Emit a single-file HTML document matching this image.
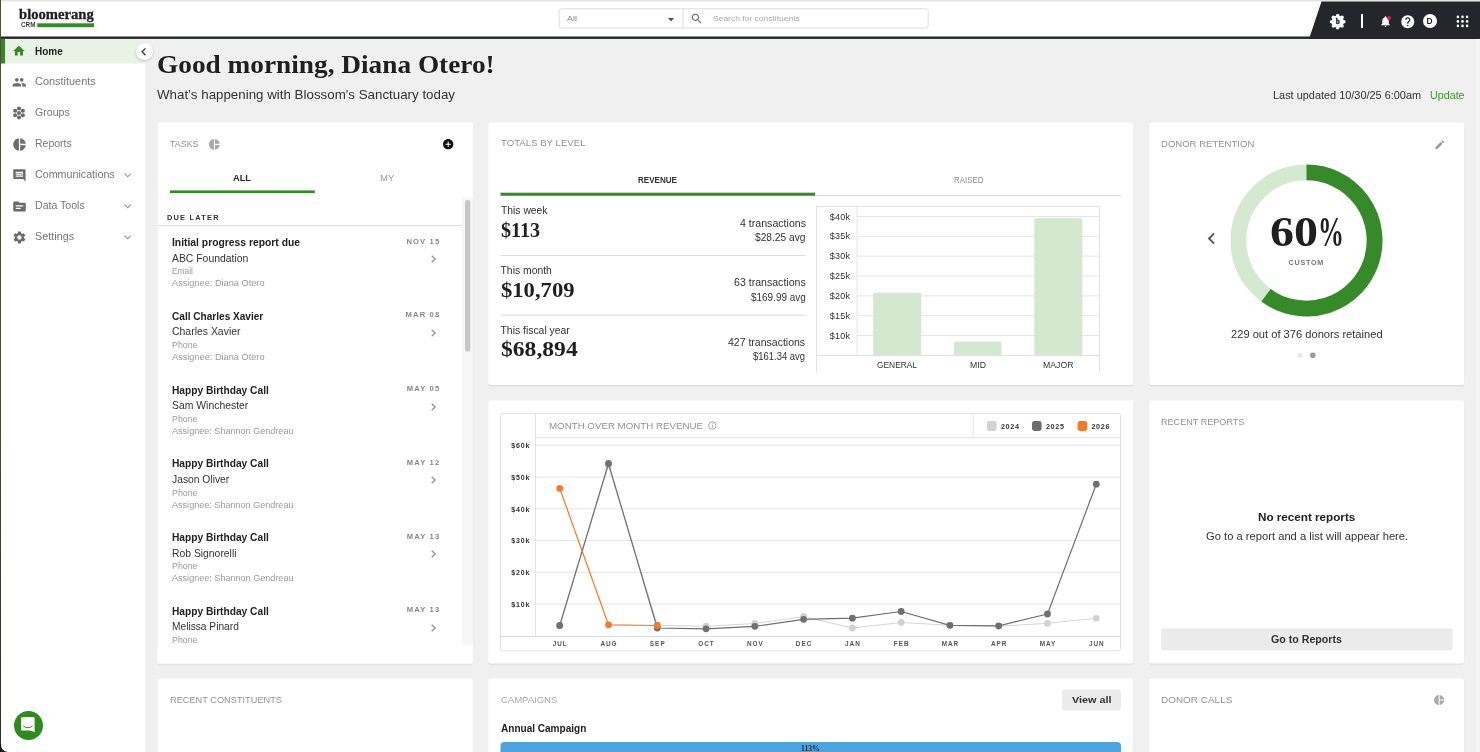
<!DOCTYPE html>
<html lang="en"><head><meta charset="utf-8"><title>Bloomerang CRM - Home</title>
<style>
*{box-sizing:border-box}
html,body{margin:0;padding:0}
body{width:1480px;height:752px;overflow:hidden;position:relative;background:#f0f0f0;font-family:"Liberation Sans",sans-serif;color:#333}
.t{position:absolute;white-space:nowrap;line-height:1;transform-origin:0 0}
.ss{font-family:"Liberation Sans",sans-serif}
.sf{font-family:"Liberation Serif",serif}
.a{position:absolute}
.card{position:absolute;background:#fff;border-radius:3px;box-shadow:0 1px 2px rgba(0,0,0,.07)}
svg{position:absolute;overflow:visible}
</style></head><body><div id="app" style="position:absolute;left:0;top:0;width:1480px;height:752px;overflow:hidden;will-change:transform">

<div class="a" style="left:0;top:0;width:1480px;height:37px;background:#fff"></div>
<div class="a" style="left:0;top:0;width:1480px;height:1px;background:#e3e3e3"></div>
<div class="a" style="left:0;top:1px;width:1480px;height:1px;background:#f3f3f3"></div>
<svg style="left:1300px;top:0" width="180" height="39" viewBox="1300 0 180 39"><polygon points="1321.5,1.5 1480,1.5 1480,39 1309,39" fill="#23262b"/></svg>
<span class="t sf" style="left:19.30px;top:7.25px;font-size:15px;font-weight:700;color:#1d1f23;transform:scaleX(0.9743);-webkit-text-stroke:.3px #1d1f23;">bloomerang</span>
<span class="t ss" style="left:20.80px;top:22.02px;font-size:6.8px;font-weight:700;color:#3a3a3a;transform:scaleX(0.9300);">CRM</span>
<svg style="left:36px;top:22px" width="60" height="7"><rect x="1.30" y="1.30" width="56.80" height="3.90" fill="#36892a"/></svg>
<svg style="left:558px;top:7px" width="372" height="22"><rect x="1.10" y="1.80" width="369.10" height="19.20" rx="2.5" fill="#fff" stroke="#dcdcdc" stroke-width="1"/></svg>
<svg style="left:681px;top:7px" width="4" height="22"><rect x="1.50" y="1.80" width="1.00" height="19.20" fill="#dcdcdc"/></svg>
<span class="t ss" style="left:567.00px;top:14.70px;font-size:8px;color:#888;transform:scaleX(1.1248);">All</span>
<svg style="left:667.5px;top:17.5px" width="6" height="3.5" viewBox="0 0 6 3.5"><path d="M0 0h6L3 3.5z" fill="#555"/></svg>
<svg style="left:689.5px;top:12px" width="13.5" height="13.5" viewBox="0 0 24 24"><path fill="#666" d="M15.5 14h-.79l-.28-.27C15.41 12.59 16 11.11 16 9.5 16 5.91 13.09 3 9.5 3S3 5.91 3 9.5 5.91 16 9.5 16c1.61 0 3.09-.59 4.23-1.57l.27.28v.79l5 4.99L20.49 19l-4.99-5zm-6 0C7.01 14 5 11.99 5 9.5S7.01 5 9.5 5 14 7.01 14 9.5 11.99 14 9.5 14z"/></svg>
<span class="t ss" style="left:713.20px;top:14.70px;font-size:8px;color:#aaa;transform:scaleX(1.0608);">Search for constituents</span>
<svg style="left:1330px;top:13.700px" width="15.400" height="15.400" viewBox="-12 -12 24 24"><g fill="#fff"><circle r="9.600"/><circle cx="0.00" cy="-9.60" r="2.700"/><circle cx="6.79" cy="-6.79" r="2.700"/><circle cx="9.60" cy="-0.00" r="2.700"/><circle cx="6.79" cy="6.79" r="2.700"/><circle cx="0.00" cy="9.60" r="2.700"/><circle cx="-6.79" cy="6.79" r="2.700"/><circle cx="-9.60" cy="0.00" r="2.700"/><circle cx="-6.79" cy="-6.79" r="2.700"/></g><text x="0.300" y="3.700" text-anchor="middle" font-family="Liberation Serif, serif" font-weight="700" font-size="11.500" fill="#23262b" stroke="#23262b" stroke-width=".5">b</text></svg>
<div class="a" style="left:1361px;top:14px;width:2px;height:14px;background:#fff"></div>
<svg style="left:1378.5px;top:14.5px" width="13" height="13" viewBox="0 0 24 24"><path fill="#fff" d="M12 22c1.1 0 2-.9 2-2h-4c0 1.1.89 2 2 2zm6-6v-5c0-3.07-1.64-5.64-4.5-6.32V4c0-.83-.67-1.500-1.500-1.500s-1.500.67-1.500 1.500v.68C7.630 5.360 6 7.920 6 11v5l-2 2v1h16v-1l-2-2z"/></svg>
<div class="a" style="left:1387.2px;top:16.3px;width:4px;height:4px;border-radius:50%;background:#e8174b"></div>
<svg style="left:1399.800px;top:13.500px" width="15.600" height="15.600" viewBox="0 0 24 24"><path fill="#fff" d="M12 2C6.480 2 2 6.480 2 12s4.480 10 10 10 10-4.480 10-10S17.520 2 12 2zm1 17h-2v-2h2v2zm2.070-7.750l-.9.920C13.450 12.900 13 13.500 13 15h-2v-.5c0-1.100.45-2.100 1.170-2.830l1.240-1.260c.37-.36.59-.86.59-1.410 0-1.100-.9-2-2-2s-2 .9-2 2H8c0-2.210 1.790-4 4-4s4 1.790 4 4c0 .88-.36 1.680-.93 2.250z"/></svg>
<div class="a" style="left:1422.500px;top:14.200px;width:14px;height:14px;border-radius:50%;background:#fff"></div>
<span class="t ss" style="left:1426.47px;top:17.36px;font-size:8.4px;font-weight:700;color:#23262b;">D</span>
<svg style="left:0;top:0" width="1480" height="40" viewBox="0 0 1480 40"><g fill="#fff"><circle cx="1457.9" cy="16.9" r="1.3"/><circle cx="1462.5" cy="16.9" r="1.3"/><circle cx="1467.1" cy="16.9" r="1.3"/><circle cx="1457.9" cy="21.4" r="1.3"/><circle cx="1462.5" cy="21.4" r="1.3"/><circle cx="1467.1" cy="21.4" r="1.3"/><circle cx="1457.9" cy="25.9" r="1.3"/><circle cx="1462.5" cy="25.9" r="1.3"/><circle cx="1467.1" cy="25.9" r="1.3"/></g></svg>
<div class="a" style="left:0;top:38.5px;width:145px;height:714px;background:#fff"></div>
<svg style="left:0px;top:37px" width="146" height="28"><rect x="1.00" y="1.90" width="144.00" height="24.60" fill="#e8f2e5"/></svg>
<svg style="left:0px;top:37px" width="6" height="28"><rect x="1.00" y="1.90" width="4.00" height="24.60" fill="#36892a"/></svg>
<svg style="left:12.40px;top:44.10px" width="13.80" height="13.80" viewBox="0 0 24 24"><path fill="#36892a" d="M10 20v-6h4v6h5v-8h3L12 3 2 12h3v8z"/></svg>
<span class="t ss" style="left:35.00px;top:47.10px;font-size:10px;font-weight:700;color:#222;">Home</span>
<svg style="left:11.70px;top:74.70px" width="14.60" height="14.60" viewBox="0 0 24 24"><path fill="#6b6b6b" d="M16 11c1.660 0 2.990-1.340 2.990-3S17.660 5 16 5c-1.660 0-3 1.340-3 3s1.340 3 3 3zm-8 0c1.660 0 2.990-1.340 2.990-3S9.660 5 8 5C6.340 5 5 6.340 5 8s1.340 3 3 3zm0 2c-2.330 0-7 1.170-7 3.500V19h14v-2.500c0-2.330-4.670-3.500-7-3.500zm8 0c-.29 0-.62.020-.97.050 1.160.84 1.970 1.970 1.970 3.450V19h6v-2.500c0-2.330-4.670-3.500-7-3.500z"/></svg>
<span class="t ss" style="left:35.00px;top:77.36px;font-size:10.4px;color:#777;transform:scaleX(1.0508);">Constituents</span>
<svg style="left:12.00px;top:105.90px" width="14" height="14" viewBox="-7 -7 14 14"><g fill="#6b6b6b"><circle r="2.050"/><circle cx="0.00" cy="-4.45" r="2.050"/><circle cx="3.85" cy="-2.23" r="2.050"/><circle cx="3.85" cy="2.22" r="2.050"/><circle cx="0.00" cy="4.45" r="2.050"/><circle cx="-3.85" cy="2.23" r="2.050"/><circle cx="-3.85" cy="-2.23" r="2.050"/></g></svg>
<span class="t ss" style="left:35.00px;top:108.36px;font-size:10.4px;color:#777;transform:scaleX(1.0182);">Groups</span>
<svg style="left:11.60px;top:136.50px" width="15.00" height="15.00" viewBox="0 0 24 24"><path fill="#6b6b6b" d="M11 2v20c-5.070-.5-9-4.790-9-10s3.930-9.500 9-10zm2.030 0v8.990H22c-.47-4.740-4.240-8.520-8.970-8.990zm0 11.010V22c4.740-.47 8.500-4.250 8.970-8.990h-8.970z"/></svg>
<span class="t ss" style="left:35.00px;top:139.36px;font-size:10.4px;color:#777;transform:scaleX(1.0085);">Reports</span>
<svg style="left:11.60px;top:167.70px" width="14.80" height="14.80" viewBox="0 0 24 24"><path fill="#6b6b6b" d="M21.990 4c0-1.100-.89-2-1.990-2H4c-1.100 0-2 .9-2 2v12c0 1.100.9 2 2 2h14l4 4-.01-18zM18 14H6v-2h12v2zm0-3H6V9h12v2zm0-3H6V6h12v2z"/></svg>
<span class="t ss" style="left:35.00px;top:170.36px;font-size:10.4px;color:#777;transform:scaleX(1.0298);">Communications</span>
<svg style="left:124.300px;top:173.0px" width="7.400" height="4.600" viewBox="0 0 7.400 4.600"><path d="M0.600 0.600L3.700 3.800 6.800 0.600" fill="none" stroke="#959595" stroke-width="1.100"/></svg>
<svg style="left:11.50px;top:198.80px" width="15.00" height="15.00" viewBox="0 0 24 24"><path fill="#6b6b6b" d="M20 6h-8l-2-2H4c-1.100 0-1.990.9-1.990 2L2 18c0 1.100.9 2 2 2h16c1.100 0 2-.9 2-2V8c0-1.100-.9-2-2-2zm-6 10H6v-2h8v2zm4-4H6v-2h12v2z"/></svg>
<span class="t ss" style="left:35.00px;top:201.36px;font-size:10.4px;color:#777;transform:scaleX(1.0162);">Data Tools</span>
<svg style="left:124.300px;top:204.0px" width="7.400" height="4.600" viewBox="0 0 7.400 4.600"><path d="M0.600 0.600L3.700 3.800 6.800 0.600" fill="none" stroke="#959595" stroke-width="1.100"/></svg>
<svg style="left:11.55px;top:229.85px" width="14.90" height="14.90" viewBox="0 0 24 24"><path fill="#6b6b6b" d="M19.140 12.940c.04-.3.06-.61.06-.94 0-.32-.02-.64-.07-.94l2.030-1.580c.18-.14.23-.41.12-.61l-1.920-3.320c-.12-.22-.37-.29-.59-.22l-2.390.96c-.5-.38-1.030-.7-1.620-.94l-.36-2.540c-.04-.24-.24-.41-.48-.41h-3.840c-.24 0-.43.17-.47.41l-.36 2.540c-.59.24-1.130.57-1.620.94l-2.390-.96c-.22-.08-.47 0-.59.22L2.740 8.870c-.12.21-.08.47.12.61l2.030 1.580c-.05.3-.09.63-.09.94s.02.64.07.94l-2.030 1.580c-.18.14-.23.41-.12.61l1.920 3.320c.12.220.37.290.59.220l2.390-.96c.5.38 1.030.7 1.620.94l.36 2.540c.05.24.24.41.48.41h3.840c.24 0 .44-.17.47-.41l.36-2.540c.59-.24 1.130-.56 1.620-.94l2.390.96c.22.08.47 0 .59-.22l1.920-3.320c.12-.22.07-.47-.12-.61l-2.010-1.580zM12 15.600c-1.980 0-3.600-1.620-3.600-3.600s1.620-3.600 3.600-3.600 3.600 1.620 3.600 3.600-1.620 3.600-3.600 3.600z"/></svg>
<span class="t ss" style="left:35.00px;top:232.36px;font-size:10.4px;color:#777;transform:scaleX(1.0440);">Settings</span>
<svg style="left:124.300px;top:235.0px" width="7.400" height="4.600" viewBox="0 0 7.400 4.600"><path d="M0.600 0.600L3.700 3.800 6.800 0.600" fill="none" stroke="#959595" stroke-width="1.100"/></svg>
<div class="a" style="left:135.6px;top:42.800px;width:17px;height:17px;border-radius:50%;background:#fff;box-shadow:0 1px 3px rgba(0,0,0,.2)"></div>
<svg style="left:135.95px;top:43.55px" width="15.50" height="15.50" viewBox="0 0 24 24"><path fill="#333" d="M15.410 7.410L14 6l-6 6 6 6 1.410-1.410L10.830 12z"/></svg>
<div class="a" style="left:13.500px;top:710.600px;width:29px;height:29px;border-radius:50%;background:#2f8a1f"></div>
<svg style="left:21.200px;top:717px" width="14" height="15.500" viewBox="0 0 14 15.500"><path d="M1.200 0h11.200q1.200 0 1.200 1.200V15.300C11.500 14.200 9.500 13.600 7 13.600H1.200q-1.200 0-1.200-1.200V1.200Q0 0 1.200 0z" fill="#fff"/><path d="M2.600 9.300Q7 12.300 11.200 9.300" fill="none" stroke="#2f8a1f" stroke-width="1" stroke-linecap="round"/></svg>
<svg style="left:-1px;top:35px" width="1482" height="5"><rect x="1.00" y="1.50" width="1480.00" height="2.40" fill="#23262b"/></svg>
<span class="t sf" style="left:157.30px;top:51.92px;font-size:26px;font-weight:700;color:#1f1f1f;transform:scaleX(1.0499);">Good morning, Diana Otero!</span>
<span class="t ss" style="left:157.30px;top:88.63px;font-size:12.2px;transform:scaleX(1.0940);">What’s happening with Blossom's Sanctuary today</span>
<span class="t ss" style="left:1273.20px;top:91.05px;font-size:10.3px;transform:scaleX(1.0601);">Last updated 10/30/25 6:00am</span>
<span class="t ss" style="left:1429.70px;top:91.05px;font-size:10.3px;color:#3a9a2c;transform:scaleX(1.0416);">Update</span>
<svg style="left:156px;top:122px" width="319" height="545"><rect x="1.10" y="1.00" width="316.30" height="542.50" rx="3" fill="rgba(0,0,0,.03)"/></svg>
<svg style="left:156px;top:122px" width="319" height="544"><rect x="1.30" y="1.00" width="315.90" height="541.50" rx="2.5" fill="rgba(0,0,0,.04)"/></svg>
<svg style="left:156px;top:121px" width="318" height="544"><rect x="1.50" y="1.50" width="315.50" height="541.00" rx="2.2" fill="#fff"/></svg>
<span class="t ss" style="left:170.00px;top:139.37px;font-size:9.8px;color:#929292;transform:scaleX(0.9075);">TASKS</span>
<svg style="left:208.00px;top:137.70px" width="12.80" height="12.80" viewBox="0 0 24 24"><path fill="#a8a8a8" d="M11 2v20c-5.070-.5-9-4.790-9-10s3.930-9.500 9-10zm2.030 0v8.990H22c-.47-4.740-4.240-8.520-8.970-8.990zm0 11.010V22c4.740-.47 8.500-4.250 8.970-8.990h-8.970z"/></svg>
<svg style="left:441.60px;top:138.00px" width="12.40" height="12.40" viewBox="0 0 24 24"><path fill="#111" d="M12 2C6.480 2 2 6.480 2 12s4.480 10 10 10 10-4.480 10-10S17.520 2 12 2zm5 11h-4v4h-2v-4H7v-2h4V7h2v4h4v2z"/></svg>
<span class="t ss" style="left:233.30px;top:173.11px;font-size:9.4px;font-weight:700;color:#2a2a2a;transform:scaleX(0.9871);">ALL</span>
<span class="t ss" style="left:380.00px;top:173.11px;font-size:9.4px;color:#9a9a9a;transform:scaleX(1.0169);">MY</span>
<svg style="left:169px;top:189px" width="147" height="6"><rect x="1.00" y="1.40" width="144.80" height="2.70" fill="#36892a"/></svg>
<svg style="left:460px;top:196px" width="14" height="450"><rect x="1.80" y="1.50" width="11.20" height="447.50" fill="#f7f7f7"/></svg>
<svg style="left:464px;top:199px" width="8" height="154"><rect x="1.00" y="1.00" width="5.30" height="151.60" rx="2.6" fill="#c6c6c6"/></svg>
<span class="t ss" style="left:167.00px;top:214.21px;font-size:7.4px;font-weight:700;letter-spacing:1.219px;">DUE LATER</span>
<svg style="left:156px;top:224px" width="307" height="3"><rect x="1.50" y="1.00" width="304.30" height="1.00" fill="#dedede"/></svg>
<span class="t ss" style="left:172.00px;top:238.08px;font-size:10.2px;font-weight:700;color:#222;transform:scaleX(1.0139);">Initial progress report due</span>
<span class="t ss" style="left:406.43px;top:237.74px;font-size:7.6px;font-weight:700;color:#888;letter-spacing:1.150px;">NOV 15</span>
<span class="t ss" style="left:172.00px;top:253.50px;font-size:10.3px;transform:scaleX(1.0098);">ABC Foundation</span>
<svg style="left:430.500px;top:255.00px" width="5" height="8" viewBox="0 0 5 8"><path d="M0.700 0.700L4.200 4 0.700 7.300" fill="none" stroke="#929292" stroke-width="1.300"/></svg>
<span class="t ss" style="left:172.00px;top:267.36px;font-size:8.4px;color:#9a9a9a;">Email</span>
<span class="t ss" style="left:172.00px;top:279.26px;font-size:8.4px;color:#9a9a9a;transform:scaleX(1.0977);">Assignee: Diana Otero</span>
<span class="t ss" style="left:172.00px;top:311.83px;font-size:10.2px;font-weight:700;color:#222;transform:scaleX(0.9890);">Call Charles Xavier</span>
<span class="t ss" style="left:405.60px;top:311.49px;font-size:7.6px;font-weight:700;color:#888;letter-spacing:1.150px;">MAR 08</span>
<span class="t ss" style="left:172.00px;top:327.25px;font-size:10.3px;transform:scaleX(1.0143);">Charles Xavier</span>
<svg style="left:430.500px;top:328.75px" width="5" height="8" viewBox="0 0 5 8"><path d="M0.700 0.700L4.200 4 0.700 7.300" fill="none" stroke="#929292" stroke-width="1.300"/></svg>
<span class="t ss" style="left:172.00px;top:341.11px;font-size:8.4px;color:#9a9a9a;transform:scaleX(1.0529);">Phone</span>
<span class="t ss" style="left:172.00px;top:353.01px;font-size:8.4px;color:#9a9a9a;transform:scaleX(1.0977);">Assignee: Diana Otero</span>
<span class="t ss" style="left:172.00px;top:385.58px;font-size:10.2px;font-weight:700;color:#222;">Happy Birthday Call</span>
<span class="t ss" style="left:406.85px;top:385.24px;font-size:7.6px;font-weight:700;color:#888;letter-spacing:1.150px;">MAY 05</span>
<span class="t ss" style="left:172.00px;top:401.00px;font-size:10.3px;transform:scaleX(1.0100);">Sam Winchester</span>
<svg style="left:430.500px;top:402.50px" width="5" height="8" viewBox="0 0 5 8"><path d="M0.700 0.700L4.200 4 0.700 7.300" fill="none" stroke="#929292" stroke-width="1.300"/></svg>
<span class="t ss" style="left:172.00px;top:414.86px;font-size:8.4px;color:#9a9a9a;transform:scaleX(1.0529);">Phone</span>
<span class="t ss" style="left:172.00px;top:426.76px;font-size:8.4px;color:#9a9a9a;transform:scaleX(1.0827);">Assignee: Shannon Gendreau</span>
<span class="t ss" style="left:172.00px;top:459.33px;font-size:10.2px;font-weight:700;color:#222;">Happy Birthday Call</span>
<span class="t ss" style="left:406.85px;top:458.99px;font-size:7.6px;font-weight:700;color:#888;letter-spacing:1.150px;">MAY 12</span>
<span class="t ss" style="left:172.00px;top:474.75px;font-size:10.3px;">Jason Oliver</span>
<svg style="left:430.500px;top:476.25px" width="5" height="8" viewBox="0 0 5 8"><path d="M0.700 0.700L4.200 4 0.700 7.300" fill="none" stroke="#929292" stroke-width="1.300"/></svg>
<span class="t ss" style="left:172.00px;top:488.61px;font-size:8.4px;color:#9a9a9a;transform:scaleX(1.0529);">Phone</span>
<span class="t ss" style="left:172.00px;top:500.51px;font-size:8.4px;color:#9a9a9a;transform:scaleX(1.0827);">Assignee: Shannon Gendreau</span>
<span class="t ss" style="left:172.00px;top:533.08px;font-size:10.2px;font-weight:700;color:#222;">Happy Birthday Call</span>
<span class="t ss" style="left:406.85px;top:532.74px;font-size:7.6px;font-weight:700;color:#888;letter-spacing:1.150px;">MAY 13</span>
<span class="t ss" style="left:172.00px;top:548.50px;font-size:10.3px;transform:scaleX(1.0061);">Rob Signorelli</span>
<svg style="left:430.500px;top:550.00px" width="5" height="8" viewBox="0 0 5 8"><path d="M0.700 0.700L4.200 4 0.700 7.300" fill="none" stroke="#929292" stroke-width="1.300"/></svg>
<span class="t ss" style="left:172.00px;top:562.36px;font-size:8.4px;color:#9a9a9a;transform:scaleX(1.0529);">Phone</span>
<span class="t ss" style="left:172.00px;top:574.26px;font-size:8.4px;color:#9a9a9a;transform:scaleX(1.0827);">Assignee: Shannon Gendreau</span>
<span class="t ss" style="left:172.00px;top:606.83px;font-size:10.2px;font-weight:700;color:#222;">Happy Birthday Call</span>
<span class="t ss" style="left:406.85px;top:606.49px;font-size:7.6px;font-weight:700;color:#888;letter-spacing:1.150px;">MAY 13</span>
<span class="t ss" style="left:172.00px;top:622.25px;font-size:10.3px;transform:scaleX(0.9892);">Melissa Pinard</span>
<svg style="left:430.500px;top:623.75px" width="5" height="8" viewBox="0 0 5 8"><path d="M0.700 0.700L4.200 4 0.700 7.300" fill="none" stroke="#929292" stroke-width="1.300"/></svg>
<span class="t ss" style="left:172.00px;top:636.11px;font-size:8.4px;color:#9a9a9a;transform:scaleX(1.0529);">Phone</span>
<svg style="left:156px;top:644px" width="318" height="21"><rect x="1.50" y="1.00" width="315.50" height="18.50" fill="#fff"/></svg>
<svg style="left:486px;top:122px" width="649" height="266"><rect x="1.80" y="1.00" width="645.80" height="264.00" rx="3" fill="rgba(0,0,0,.03)"/></svg>
<svg style="left:487px;top:122px" width="648" height="265"><rect x="1.00" y="1.00" width="645.40" height="263.00" rx="2.5" fill="rgba(0,0,0,.04)"/></svg>
<svg style="left:487px;top:121px" width="648" height="265"><rect x="1.20" y="1.50" width="645.00" height="262.50" rx="2.2" fill="#fff"/></svg>
<span class="t ss" style="left:500.50px;top:137.97px;font-size:9.8px;color:#929292;transform:scaleX(0.9820);">TOTALS BY LEVEL</span>
<span class="t ss" style="left:638.00px;top:175.41px;font-size:9.4px;font-weight:700;transform:scaleX(0.8604);">REVENUE</span>
<span class="t ss" style="left:953.60px;top:175.41px;font-size:9.4px;color:#8a8a8a;transform:scaleX(0.8423);">RAISED</span>
<svg style="left:499px;top:194px" width="623" height="3"><rect x="1.50" y="1.00" width="620.50" height="1.00" fill="#dcdcdc"/></svg>
<svg style="left:499px;top:191px" width="317" height="6"><rect x="1.50" y="1.70" width="314.50" height="3.00" fill="#36892a"/></svg>
<span class="t ss" style="left:500.50px;top:206.16px;font-size:10.4px;transform:scaleX(0.9940);">This week</span>
<span class="t sf" style="left:500.50px;top:218.94px;font-size:22px;font-weight:700;color:#1f1f1f;transform:scaleX(0.9113);">$113</span>
<span class="t ss" style="left:739.50px;top:218.50px;font-size:10.3px;transform:scaleX(1.0295);">4 transactions</span>
<span class="t ss" style="left:755.00px;top:232.75px;font-size:10.3px;transform:scaleX(0.9908);">$28.25 avg</span>
<svg style="left:499px;top:254px" width="308" height="3"><rect x="1.50" y="1.00" width="305.00" height="1.00" fill="#dcdcdc"/></svg>
<span class="t ss" style="left:500.50px;top:265.91px;font-size:10.4px;">This month</span>
<span class="t sf" style="left:500.50px;top:278.69px;font-size:22px;font-weight:700;color:#1f1f1f;transform:scaleX(1.0280);">$10,709</span>
<span class="t ss" style="left:733.75px;top:278.25px;font-size:10.3px;transform:scaleX(1.0273);">63 transactions</span>
<span class="t ss" style="left:750.75px;top:292.50px;font-size:10.3px;transform:scaleX(0.9658);">$169.99 avg</span>
<svg style="left:499px;top:313px" width="308" height="4"><rect x="1.50" y="1.75" width="305.00" height="1.00" fill="#dcdcdc"/></svg>
<span class="t ss" style="left:500.50px;top:325.66px;font-size:10.4px;">This fiscal year</span>
<span class="t sf" style="left:500.50px;top:338.44px;font-size:22px;font-weight:700;color:#1f1f1f;transform:scaleX(1.0727);">$68,894</span>
<span class="t ss" style="left:728.40px;top:338.00px;font-size:10.3px;transform:scaleX(1.0203);">427 transactions</span>
<span class="t ss" style="left:753.40px;top:352.25px;font-size:10.3px;transform:scaleX(0.9191);">$161.34 avg</span>
<svg style="left:0;top:0" width="1480" height="400" viewBox="0 0 1480 400"><path d="M816.500 372.500V206.500H1099.500V372.500" fill="none" stroke="#e2e2e2" stroke-width="1"/><line x1="857" x2="1099" y1="216.50" y2="216.50" stroke="#e6e6e6" stroke-width="1"/><line x1="857" x2="1099" y1="236.33" y2="236.33" stroke="#e6e6e6" stroke-width="1"/><line x1="857" x2="1099" y1="256.16" y2="256.16" stroke="#e6e6e6" stroke-width="1"/><line x1="857" x2="1099" y1="275.99" y2="275.99" stroke="#e6e6e6" stroke-width="1"/><line x1="857" x2="1099" y1="295.82" y2="295.82" stroke="#e6e6e6" stroke-width="1"/><line x1="857" x2="1099" y1="315.65" y2="315.65" stroke="#e6e6e6" stroke-width="1"/><line x1="857" x2="1099" y1="335.48" y2="335.48" stroke="#e6e6e6" stroke-width="1"/><line x1="816.500" x2="1099.500" y1="355.400" y2="355.400" stroke="#dedede" stroke-width="1"/><line x1="857" x2="857" y1="206.500" y2="355.400" stroke="#e6e6e6" stroke-width="1"/><path d="M873.2 355.400V294.2q0-1.500 1.500-1.500H919.7q1.500 0 1.500 1.500V355.400z" fill="#d4e7cf"/><path d="M954.0 355.400V343.0q0-1.500 1.500-1.500H1000.0q1.500 0 1.500 1.500V355.400z" fill="#d4e7cf"/><path d="M1034.3 355.400V219.7q0-1.500 1.500-1.500H1080.8q1.500 0 1.500 1.500V355.400z" fill="#d4e7cf"/></svg>
<span class="t ss" style="left:829.72px;top:212.55px;font-size:9px;letter-spacing:0.250px;">$40k</span>
<span class="t ss" style="left:829.72px;top:232.38px;font-size:9px;letter-spacing:0.250px;">$35k</span>
<span class="t ss" style="left:829.72px;top:252.21px;font-size:9px;letter-spacing:0.250px;">$30k</span>
<span class="t ss" style="left:829.72px;top:272.04px;font-size:9px;letter-spacing:0.250px;">$25k</span>
<span class="t ss" style="left:829.72px;top:291.87px;font-size:9px;letter-spacing:0.250px;">$20k</span>
<span class="t ss" style="left:829.72px;top:311.70px;font-size:9px;letter-spacing:0.250px;">$15k</span>
<span class="t ss" style="left:829.72px;top:331.53px;font-size:9px;letter-spacing:0.250px;">$10k</span>
<span class="t ss" style="left:877.00px;top:360.85px;font-size:9px;transform:scaleX(0.9299);">GENERAL</span>
<span class="t ss" style="left:969.70px;top:360.85px;font-size:9px;transform:scaleX(0.9636);">MID</span>
<span class="t ss" style="left:1043.00px;top:360.85px;font-size:9px;transform:scaleX(0.9683);">MAJOR</span>
<svg style="left:1147px;top:122px" width="319" height="266"><rect x="1.80" y="1.00" width="315.80" height="264.00" rx="3" fill="rgba(0,0,0,.03)"/></svg>
<svg style="left:1148px;top:122px" width="318" height="265"><rect x="1.00" y="1.00" width="315.40" height="263.00" rx="2.5" fill="rgba(0,0,0,.04)"/></svg>
<svg style="left:1148px;top:121px" width="318" height="265"><rect x="1.20" y="1.50" width="315.00" height="262.50" rx="2.2" fill="#fff"/></svg>
<span class="t ss" style="left:1161.20px;top:139.27px;font-size:9.8px;color:#929292;transform:scaleX(0.9739);">DONOR RETENTION</span>
<svg style="left:1433.75px;top:138.65px" width="11.50" height="11.50" viewBox="0 0 24 24"><path fill="#979797" d="M3 17.250V21h3.750L17.810 9.940l-3.750-3.750L3 17.250zM20.710 7.040c.39-.39.39-1.020 0-1.410l-2.340-2.340c-.39-.39-1.020-.39-1.410 0l-1.830 1.830 3.750 3.750 1.830-1.830z"/></svg>
<svg style="left:0;top:0" width="1480" height="400" viewBox="0 0 1480 400"><circle cx="1306.5" cy="240.5" r="68.1" fill="none" stroke="#d5e8d0" stroke-width="15.8"/><path d="M1306.50 172.40A68.1 68.1 0 1 1 1265.99 295.24" fill="none" stroke="#378a2a" stroke-width="15.8"/><circle cx="1300.100" cy="355.200" r="2.500" fill="#e6e6e6"/><circle cx="1312.800" cy="355.200" r="2.800" fill="#9a9a9a"/></svg>
<span class="t sf" style="left:1269.80px;top:210.41px;font-size:43px;font-weight:700;color:#1f1f1f;transform:scaleX(1.1186);">60</span>
<span class="t sf" style="left:1318.30px;top:210.41px;font-size:43px;font-weight:700;color:#1f1f1f;transform:scaleX(0.6023);">%</span>
<span class="t ss" style="left:1288.50px;top:258.98px;font-size:7.2px;font-weight:700;color:#777;letter-spacing:0.757px;">CUSTOM</span>
<svg style="left:1199.80px;top:227.30px" width="23.00" height="23.00" viewBox="0 0 24 24"><path fill="#555" d="M15.410 7.410L14 6l-6 6 6 6 1.410-1.410L10.830 12z"/></svg>
<span class="t ss" style="left:1231.20px;top:329.55px;font-size:10.3px;transform:scaleX(1.0808);">229 out of 376 donors retained</span>
<svg style="left:486px;top:400px" width="649" height="267"><rect x="1.80" y="1.00" width="645.80" height="264.50" rx="3" fill="rgba(0,0,0,.03)"/></svg>
<svg style="left:487px;top:400px" width="648" height="266"><rect x="1.00" y="1.00" width="645.40" height="263.50" rx="2.5" fill="rgba(0,0,0,.04)"/></svg>
<svg style="left:487px;top:399px" width="648" height="266"><rect x="1.20" y="1.50" width="645.00" height="263.00" rx="2.2" fill="#fff"/></svg>
<svg style="left:0;top:0" width="1480" height="752" viewBox="0 0 1480 752"><rect x="500.500" y="413.300" width="620" height="237.500" rx="2" fill="#fff" stroke="#e0e0e0" stroke-width="1"/><line x1="535.500" x2="535.500" y1="413.300" y2="636.500" stroke="#e3e3e3"/><line x1="535.500" x2="1120.500" y1="437.800" y2="437.800" stroke="#e3e3e3"/><line x1="973.200" x2="973.200" y1="413.300" y2="437.800" stroke="#e3e3e3"/><line x1="535.500" x2="1120.500" y1="445.20" y2="445.20" stroke="#e6e6e6"/><line x1="535.500" x2="1120.500" y1="476.97" y2="476.97" stroke="#e6e6e6"/><line x1="535.500" x2="1120.500" y1="508.74" y2="508.74" stroke="#e6e6e6"/><line x1="535.500" x2="1120.500" y1="540.51" y2="540.51" stroke="#e6e6e6"/><line x1="535.500" x2="1120.500" y1="572.28" y2="572.28" stroke="#e6e6e6"/><line x1="535.500" x2="1120.500" y1="604.05" y2="604.05" stroke="#e6e6e6"/><line x1="500.500" x2="1120.500" y1="636.500" y2="636.500" stroke="#dcdcdc"/><polyline points="559.70,625.60 608.48,465.30 657.26,625.20 706.04,626.20 754.82,623.50 803.60,616.50 852.38,628.00 901.16,622.50 949.94,625.30 998.72,626.30 1047.50,623.30 1096.28,618.30" fill="none" stroke="#d6d6d6" stroke-width="1.1" stroke-linejoin="round"/><circle cx="559.70" cy="625.60" r="3.400" fill="#d2d2d2"/><circle cx="608.48" cy="465.30" r="3.400" fill="#d2d2d2"/><circle cx="657.26" cy="625.20" r="3.400" fill="#d2d2d2"/><circle cx="706.04" cy="626.20" r="3.400" fill="#d2d2d2"/><circle cx="754.82" cy="623.50" r="3.400" fill="#d2d2d2"/><circle cx="803.60" cy="616.50" r="3.400" fill="#d2d2d2"/><circle cx="852.38" cy="628.00" r="3.400" fill="#d2d2d2"/><circle cx="901.16" cy="622.50" r="3.400" fill="#d2d2d2"/><circle cx="949.94" cy="625.30" r="3.400" fill="#d2d2d2"/><circle cx="998.72" cy="626.30" r="3.400" fill="#d2d2d2"/><circle cx="1047.50" cy="623.30" r="3.400" fill="#d2d2d2"/><circle cx="1096.28" cy="618.30" r="3.400" fill="#d2d2d2"/><polyline points="559.70,625.50 608.48,463.50 657.26,628.00 706.04,628.80 754.82,626.30 803.60,619.30 852.38,618.20 901.16,611.50 949.94,625.30 998.72,625.80 1047.50,614.00 1096.28,484.20" fill="none" stroke="#707070" stroke-width="1.2" stroke-linejoin="round"/><circle cx="559.70" cy="625.50" r="3.400" fill="#707070"/><circle cx="608.48" cy="463.50" r="3.400" fill="#707070"/><circle cx="657.26" cy="628.00" r="3.400" fill="#707070"/><circle cx="706.04" cy="628.80" r="3.400" fill="#707070"/><circle cx="754.82" cy="626.30" r="3.400" fill="#707070"/><circle cx="803.60" cy="619.30" r="3.400" fill="#707070"/><circle cx="852.38" cy="618.20" r="3.400" fill="#707070"/><circle cx="901.16" cy="611.50" r="3.400" fill="#707070"/><circle cx="949.94" cy="625.30" r="3.400" fill="#707070"/><circle cx="998.72" cy="625.80" r="3.400" fill="#707070"/><circle cx="1047.50" cy="614.00" r="3.400" fill="#707070"/><circle cx="1096.28" cy="484.20" r="3.400" fill="#707070"/><polyline points="559.70,488.30 608.48,624.80 657.26,625.50" fill="none" stroke="#f47a2a" stroke-width="1.2" stroke-linejoin="round"/><circle cx="559.70" cy="488.30" r="3.400" fill="#f47a2a"/><circle cx="608.48" cy="624.80" r="3.400" fill="#f47a2a"/><circle cx="657.26" cy="625.50" r="3.400" fill="#f47a2a"/><rect x="987.0" y="421" width="9.600" height="9.900" rx="2.400" fill="#d2d2d2"/><rect x="1032.0" y="421" width="9.600" height="9.900" rx="2.400" fill="#6b6f6f"/><rect x="1077.6" y="421" width="9.600" height="9.900" rx="2.400" fill="#f47a2a"/><circle cx="712.300" cy="425.500" r="3.700" fill="none" stroke="#9a9a9a" stroke-width="0.900"/><rect x="711.900" y="424.900" width="0.900" height="2.700" fill="#9a9a9a"/><rect x="711.900" y="423.300" width="0.900" height="0.900" fill="#9a9a9a"/></svg>
<span class="t ss" style="left:548.80px;top:420.77px;font-size:9.8px;color:#929292;transform:scaleX(0.9927);">MONTH OVER MONTH REVENUE</span>
<span class="t ss" style="left:1000.90px;top:422.58px;font-size:7.2px;font-weight:700;letter-spacing:0.733px;">2024</span>
<span class="t ss" style="left:1045.90px;top:422.58px;font-size:7.2px;font-weight:700;letter-spacing:0.733px;">2025</span>
<span class="t ss" style="left:1091.40px;top:422.58px;font-size:7.2px;font-weight:700;letter-spacing:0.733px;">2026</span>
<span class="t ss" style="left:511.30px;top:442.05px;font-size:7px;font-weight:700;letter-spacing:0.807px;">$60k</span>
<span class="t ss" style="left:511.30px;top:473.82px;font-size:7px;font-weight:700;letter-spacing:0.807px;">$50k</span>
<span class="t ss" style="left:511.30px;top:505.59px;font-size:7px;font-weight:700;letter-spacing:0.807px;">$40k</span>
<span class="t ss" style="left:511.30px;top:537.36px;font-size:7px;font-weight:700;letter-spacing:0.807px;">$30k</span>
<span class="t ss" style="left:511.30px;top:569.13px;font-size:7px;font-weight:700;letter-spacing:0.807px;">$20k</span>
<span class="t ss" style="left:511.30px;top:600.90px;font-size:7px;font-weight:700;letter-spacing:0.807px;">$10k</span>
<span class="t ss" style="left:552.66px;top:641.36px;font-size:6.4px;font-weight:700;color:#555;letter-spacing:1.000px;">JUL</span>
<span class="t ss" style="left:600.38px;top:641.36px;font-size:6.4px;font-weight:700;color:#555;letter-spacing:1.000px;">AUG</span>
<span class="t ss" style="left:649.86px;top:641.36px;font-size:6.4px;font-weight:700;color:#555;letter-spacing:1.000px;">SEP</span>
<span class="t ss" style="left:698.29px;top:641.36px;font-size:6.4px;font-weight:700;color:#555;letter-spacing:1.000px;">OCT</span>
<span class="t ss" style="left:746.89px;top:641.36px;font-size:6.4px;font-weight:700;color:#555;letter-spacing:1.000px;">NOV</span>
<span class="t ss" style="left:795.85px;top:641.36px;font-size:6.4px;font-weight:700;color:#555;letter-spacing:1.000px;">DEC</span>
<span class="t ss" style="left:844.98px;top:641.36px;font-size:6.4px;font-weight:700;color:#555;letter-spacing:1.000px;">JAN</span>
<span class="t ss" style="left:893.76px;top:641.36px;font-size:6.4px;font-weight:700;color:#555;letter-spacing:1.000px;">FEB</span>
<span class="t ss" style="left:941.66px;top:641.36px;font-size:6.4px;font-weight:700;color:#555;letter-spacing:1.000px;">MAR</span>
<span class="t ss" style="left:990.97px;top:641.36px;font-size:6.4px;font-weight:700;color:#555;letter-spacing:1.000px;">APR</span>
<span class="t ss" style="left:1039.69px;top:641.36px;font-size:6.4px;font-weight:700;color:#555;letter-spacing:1.000px;">MAY</span>
<span class="t ss" style="left:1088.88px;top:641.36px;font-size:6.4px;font-weight:700;color:#555;letter-spacing:1.000px;">JUN</span>
<svg style="left:1147px;top:400px" width="319" height="267"><rect x="1.80" y="1.00" width="315.80" height="264.50" rx="3" fill="rgba(0,0,0,.03)"/></svg>
<svg style="left:1148px;top:400px" width="318" height="266"><rect x="1.00" y="1.00" width="315.40" height="263.50" rx="2.5" fill="rgba(0,0,0,.04)"/></svg>
<svg style="left:1148px;top:399px" width="318" height="266"><rect x="1.20" y="1.50" width="315.00" height="263.00" rx="2.2" fill="#fff"/></svg>
<span class="t ss" style="left:1161.20px;top:416.97px;font-size:9.8px;color:#929292;transform:scaleX(0.9265);">RECENT REPORTS</span>
<span class="t ss" style="left:1257.70px;top:511.82px;font-size:10.8px;font-weight:700;color:#222;transform:scaleX(1.0811);">No recent reports</span>
<span class="t ss" style="left:1205.80px;top:531.54px;font-size:10.3px;transform:scaleX(1.0869);">Go to a report and a list will appear here.</span>
<svg style="left:1160px;top:627px" width="294" height="25"><rect x="1.20" y="1.30" width="291.40" height="21.90" rx="3" fill="#ebebeb"/></svg>
<span class="t ss" style="left:1270.90px;top:634.56px;font-size:10.4px;font-weight:700;transform:scaleX(1.0234);">Go to Reports</span>
<svg style="left:156px;top:678px" width="319" height="85"><rect x="1.10" y="1.00" width="316.30" height="83.00" rx="3" fill="rgba(0,0,0,.03)"/></svg>
<svg style="left:156px;top:678px" width="319" height="84"><rect x="1.30" y="1.00" width="315.90" height="82.00" rx="2.5" fill="rgba(0,0,0,.04)"/></svg>
<svg style="left:156px;top:677px" width="318" height="84"><rect x="1.50" y="1.50" width="315.50" height="81.50" rx="2.2" fill="#fff"/></svg>
<span class="t ss" style="left:169.80px;top:695.07px;font-size:9.8px;color:#929292;transform:scaleX(0.9409);">RECENT CONSTITUENTS</span>
<svg style="left:486px;top:678px" width="649" height="85"><rect x="1.80" y="1.00" width="645.80" height="83.00" rx="3" fill="rgba(0,0,0,.03)"/></svg>
<svg style="left:487px;top:678px" width="648" height="84"><rect x="1.00" y="1.00" width="645.40" height="82.00" rx="2.5" fill="rgba(0,0,0,.04)"/></svg>
<svg style="left:487px;top:677px" width="648" height="84"><rect x="1.20" y="1.50" width="645.00" height="81.50" rx="2.2" fill="#fff"/></svg>
<span class="t ss" style="left:500.50px;top:695.07px;font-size:9.8px;color:#aaa;transform:scaleX(0.9694);">CAMPAIGNS</span>
<svg style="left:1061px;top:688px" width="61" height="24"><rect x="1.00" y="1.50" width="59.00" height="21.00" rx="3" fill="#ebebeb"/></svg>
<span class="t ss" style="left:1072.00px;top:695.47px;font-size:9.8px;font-weight:700;transform:scaleX(1.1044);">View all</span>
<span class="t ss" style="left:500.50px;top:724.04px;font-size:10.3px;font-weight:700;color:#222;transform:scaleX(0.9745);">Annual Campaign</span>
<svg style="left:499px;top:741px" width="623" height="16"><rect x="1.50" y="1.00" width="620.50" height="14.00" rx="4" fill="#4fa3dc"/></svg>
<span class="t sf" style="left:801.30px;top:744.46px;font-size:8.6px;font-weight:700;color:#1c2a44;transform:scaleX(0.8898);">113%</span>
<svg style="left:1147px;top:678px" width="319" height="85"><rect x="1.80" y="1.00" width="315.80" height="83.00" rx="3" fill="rgba(0,0,0,.03)"/></svg>
<svg style="left:1148px;top:678px" width="318" height="84"><rect x="1.00" y="1.00" width="315.40" height="82.00" rx="2.5" fill="rgba(0,0,0,.04)"/></svg>
<svg style="left:1148px;top:677px" width="318" height="84"><rect x="1.20" y="1.50" width="315.00" height="81.50" rx="2.2" fill="#fff"/></svg>
<span class="t ss" style="left:1161.20px;top:695.07px;font-size:9.8px;color:#929292;transform:scaleX(1.0152);">DONOR CALLS</span>
<svg style="left:1433.30px;top:693.80px" width="12.20" height="12.20" viewBox="0 0 24 24"><path fill="#a8a8a8" d="M11 2v20c-5.070-.5-9-4.790-9-10s3.930-9.500 9-10zm2.030 0v8.990H22c-.47-4.740-4.240-8.520-8.970-8.990zm0 11.010V22c4.740-.47 8.500-4.250 8.970-8.990h-8.970z"/></svg>
<div class="a" style="left:1476px;top:39px;width:4px;height:713px;background:#f6f6f6"></div>
<div class="a" style="left:0;top:0;width:1px;height:752px;background:linear-gradient(#4d5038,#4a4d36 50%,#2c2c28)"></div>
<svg style="left:0;top:744px" width="8" height="8" viewBox="0 0 8 8"><path d="M0 0h1.200A6.800 6.800 0 0 0 8 8H0z" fill="#1a1a1a"/></svg>
</div></body></html>
